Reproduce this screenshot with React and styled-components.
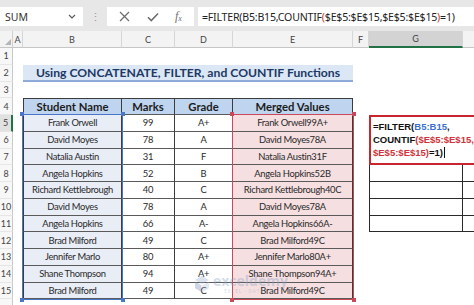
import React from 'react';
import styled, { createGlobalStyle } from 'styled-components';

const GlobalStyle = createGlobalStyle`
  html, body {
    margin: 0;
    padding: 0;
    background: #ffffff;
    overflow: hidden;
  }
`;

const COLS = '13px 10px 99px 53px 58px 120px 16px 94px 90px';
const CELL_FONT = "Lato, 'Open Sans', sans-serif";
const UI_FONT = "'Noto Sans', 'Open Sans', sans-serif";

const students = [
  ['Frank Orwell', '99', 'A+'],
  ['David Moyes', '78', 'A'],
  ['Natalia Austin', '31', 'F'],
  ['Angela Hopkins', '52', 'B'],
  ['Richard Kettlebrough', '40', 'C'],
  ['David Moyes', '78', 'A'],
  ['Angela Hopkins', '66', 'A-'],
  ['Brad Milford', '49', 'C'],
  ['Jennifer Marlo', '80', 'A+'],
  ['Shane Thompson', '94', 'A+'],
  ['Brad Milford', '49', 'C'],
];

const letters = ['A', 'B', 'C', 'D', 'E', 'F', 'G', 'H'];

const Window = styled.div`
  width: 474px;
  height: 305px;
  overflow: hidden;
  display: flex;
  flex-direction: column;
  background: #fff;
`;

// formula bar
const FormulaBar = styled.div`
  height: 31px;
  box-sizing: border-box;
  padding: 7px 0 5px 0;
  background: #e7e7e7;
  display: flex;
  align-items: stretch;
  font-family: ${UI_FONT};
  flex-shrink: 0;
`;

const NameBox = styled.div`
  width: 83px;
  background: #fff;
  display: flex;
  align-items: center;
  justify-content: space-between;
  padding: 0 7px 0 5px;
  box-sizing: border-box;
  font-size: 10.5px;
  color: #333;
`;

const Dots = styled.div`
  width: 24px;
  display: flex;
  align-items: center;
  justify-content: center;
  color: #9a9a9a;
  font-size: 11px;
`;

const ButtonGroup = styled.div`
  width: 87px;
  background: #fff;
  display: flex;
  align-items: center;
  justify-content: space-around;
  padding: 0 4px;
  box-sizing: border-box;
`;

const Fx = styled.span`
  font-family: 'Liberation Serif', serif;
  font-style: italic;
  font-size: 12px;
  color: #707070;
  sub {
    font-size: 8px;
    vertical-align: -1px;
  }
`;

const FormulaInput = styled.div`
  flex: 1;
  margin-left: 4px;
  background: #fff;
  display: flex;
  align-items: center;
  padding-left: 4px;
  font-size: 10.6px;
  letter-spacing: -0.22px;
  color: #222;
  white-space: nowrap;
  overflow: hidden;
`;

const Paren = styled.span`
  color: #c0392b;
`;

// sheet
const Sheet = styled.div`
  position: relative;
  flex: 1;
  display: grid;
  grid-template-columns: ${COLS};
  grid-template-rows: 17px repeat(17, 16.75px);
  overflow: hidden;
  font-family: ${CELL_FONT};
`;

const Corner = styled.div`
  grid-column: 1;
  grid-row: 1;
  background: #f3f3f3;
  border-right: 1px solid #d0d0d0;
  border-bottom: 1px solid #c6c6c6;
  box-sizing: border-box;
  display: flex;
  align-items: flex-end;
  justify-content: flex-end;
  padding: 0 1px 2px 0;
  &::after {
    content: '';
    width: 0;
    height: 0;
    border-left: 6px solid transparent;
    border-bottom: 6px solid #b5b5b5;
  }
`;

const ColHead = styled.div`
  grid-column: ${p => p.$col};
  grid-row: 1;
  background: ${p => (p.$active ? '#d3d3d3' : '#f3f3f3')};
  border-right: 1px solid #d6d6d6;
  border-bottom: ${p => (p.$active ? '2px solid #217346' : '1px solid #c6c6c6')};
  box-sizing: border-box;
  display: flex;
  align-items: center;
  justify-content: center;
  font-size: 9px;
  color: #444;
`;

const RowHead = styled.div`
  grid-column: 1;
  grid-row: ${p => p.$row};
  background: ${p => (p.$active ? '#e1e1e1' : '#f7f7f7')};
  border-right: ${p => (p.$active ? '2px solid #217346' : '1px solid #c9c9c9')};
  border-bottom: 1px solid #e6e6e6;
  box-sizing: border-box;
  display: flex;
  align-items: center;
  justify-content: center;
  font-size: 9px;
  color: #444;
`;

const TitleBand = styled.div`
  grid-column: 3 / 7;
  grid-row: 3;
  background: #dbe7f5;
  border-bottom: 2px solid #8eaad8;
  box-sizing: border-box;
  display: flex;
  align-items: center;
  justify-content: center;
  font-weight: 700;
  font-size: 12.2px;
  color: #203864;
  white-space: nowrap;
`;

const fills = {
  name: '#e8edf6',
  plain: '#ffffff',
  merged: '#f5dfe0',
  head: '#bfd4ee',
};

const TableCell = styled.div`
  grid-column: ${p => p.$col};
  grid-row: ${p => p.$row};
  background: ${p => fills[p.$fill]};
  border-right: 1px solid #3c3c3c;
  border-bottom: 1px solid #5a5a5a;
  border-left: ${p => (p.$first ? '1px solid #3c3c3c' : 'none')};
  border-top: ${p => (p.$top ? '1px solid #3c3c3c' : 'none')};
  box-sizing: border-box;
  display: flex;
  align-items: center;
  justify-content: center;
  font-size: ${p => (p.$head ? '11.3px' : '9.4px')};
  letter-spacing: ${p => (p.$head ? '0' : '-0.3px')};
  font-weight: ${p => (p.$head ? 700 : 400)};
  color: ${p => (p.$head ? '#1c1c1c' : '#2a2a2a')};
  white-space: nowrap;
  overflow: hidden;
`;

const Selection = styled.div`
  grid-column: ${p => p.$col};
  grid-row: 6 / 17;
  position: relative;
  z-index: 2;
  margin: -1px;
  border: 1.5px solid ${p => p.$color};
  pointer-events: none;
`;

const Handle = styled.span`
  position: absolute;
  width: 4px;
  height: 4px;
  background: ${p => p.$color};
  ${p => (p.$top ? 'top: -3px;' : 'bottom: -3px;')}
  ${p => (p.$left ? 'left: -3px;' : 'right: -3px;')}
`;

const Editor = styled.div`
  grid-column: 8 / 10;
  grid-row: 6 / 9;
  z-index: 3;
  background: #fff;
  border: 2px solid #c8252c;
  box-sizing: border-box;
  padding: 4px 0 0 2px;
  font-family: 'Liberation Sans', Arial, sans-serif;
  font-weight: 700;
  font-size: 9.5px;
  line-height: 12.8px;
  color: #111;
  white-space: nowrap;
`;

const Ref = styled.span`
  color: ${p => (p.$tone === 'blue' ? '#3c6fd1' : '#d0343b')};
`;

const Caret = styled.span`
  display: inline-block;
  width: 1px;
  height: 11px;
  background: #111;
  vertical-align: -2px;
  margin-left: 1px;
`;

const GridCell = styled.div`
  grid-column: ${p => p.$col};
  grid-row: ${p => p.$row};
  border-right: 1px solid #2a2a2a;
  border-bottom: 1px solid #2a2a2a;
  border-left: ${p => (p.$first ? '1px solid #2a2a2a' : 'none')};
  box-sizing: border-box;
`;

const Watermark = styled.div`
  position: absolute;
  left: 194px;
  top: 243px;
  display: flex;
  align-items: center;
  gap: 3px;
  opacity: 0.38;
  pointer-events: none;
  z-index: 4;
`;

const MarkText = styled.div`
  display: flex;
  flex-direction: column;
  align-items: center;
  line-height: 1;
  color: #8ea4c6;
  font-family: 'Open Sans', sans-serif;
  span:first-child {
    font-size: 14px;
    font-weight: 700;
  }
  span:last-child {
    font-size: 4.5px;
    letter-spacing: 1px;
    margin-top: 1px;
  }
`;

const Logo = () => (
  <svg width="16" height="18" viewBox="0 0 16 18">
    <path d="M8 1 L15 5 L8 9 L1 5 Z" fill="#9fb4d4" />
    <path d="M1 6.5 L7.5 10.2 L7.5 17 L1 13.3 Z" fill="#7d96c0" />
    <path d="M15 6.5 L8.5 10.2 L8.5 17 L15 13.3 Z" fill="#b7c6de" />
  </svg>
);

const App = () => (
  <Window>
    <GlobalStyle />
    <FormulaBar>
      <NameBox>
        SUM
        <svg width="8" height="5" viewBox="0 0 8 5">
          <path d="M1 1 L4 4 L7 1" fill="none" stroke="#555" strokeWidth="1.1" />
        </svg>
      </NameBox>
      <Dots>⋮</Dots>
      <ButtonGroup>
        <svg width="11" height="11" viewBox="0 0 11 11">
          <path d="M1 1 L10 10 M10 1 L1 10" stroke="#6b6b6b" strokeWidth="1.2" />
        </svg>
        <svg width="12" height="10" viewBox="0 0 12 10">
          <path d="M1 5.2 L4.3 8.6 L11 1.4" fill="none" stroke="#6b6b6b" strokeWidth="1.5" />
        </svg>
        <Fx>f<sub>x</sub></Fx>
      </ButtonGroup>
      <FormulaInput>
        =FILTER(B5:B15,COUNTIF<Paren>(</Paren>$E$5:$E$15,$E$5:$E$15<Paren>)</Paren>=1)
      </FormulaInput>
    </FormulaBar>

    <Sheet>
      <Corner />
      {letters.map((l, i) => (
        <ColHead key={l} $col={i + 2} $active={l === 'G'}>{l === 'H' ? '' : l}</ColHead>
      ))}
      {Array.from({ length: 17 }, (_, i) => (
        <RowHead key={i} $row={i + 2} $active={i + 1 === 5}>{i < 15 ? i + 1 : ''}</RowHead>
      ))}

      <TitleBand>Using CONCATENATE, FILTER, and COUNTIF Functions</TitleBand>

      {['Student Name', 'Marks', 'Grade', 'Merged Values'].map((h, i) => (
        <TableCell key={h} $col={i + 3} $row={5} $fill="head" $head $top $first={i === 0}>{h}</TableCell>
      ))}
      {students.map(([name, mark, grade], r) => (
        <React.Fragment key={r}>
          <TableCell $col={3} $row={r + 6} $fill="name" $first>{name}</TableCell>
          <TableCell $col={4} $row={r + 6} $fill="plain">{mark}</TableCell>
          <TableCell $col={5} $row={r + 6} $fill="plain">{grade}</TableCell>
          <TableCell $col={6} $row={r + 6} $fill="merged">{name + mark + grade}</TableCell>
        </React.Fragment>
      ))}

      <Selection $col={3} $color="#4a75c8">
        <Handle $color="#4a75c8" $top $left />
        <Handle $color="#4a75c8" $top />
        <Handle $color="#4a75c8" $left />
        <Handle $color="#4a75c8" />
      </Selection>
      <Selection $col={6} $color="#c9485a">
        <Handle $color="#c9485a" $top $left />
        <Handle $color="#c9485a" $top />
        <Handle $color="#c9485a" $left />
        <Handle $color="#c9485a" />
      </Selection>

      <Editor>
        =FILTER(<Ref $tone="blue">B5:B15</Ref>,<br />
        COUNTIF<Ref>($E$5:$E$15,</Ref><br />
        <Ref>$E$5:$E$15)</Ref>=1)<Caret />
      </Editor>
      {[9, 10, 11, 12].map(r => (
        <React.Fragment key={r}>
          <GridCell $col={8} $row={r} $first />
          <GridCell $col={9} $row={r} />
        </React.Fragment>
      ))}

      <Watermark>
        <Logo />
        <MarkText>
          <span>exceldemy</span>
          <span>EXCEL · DATA · BI</span>
        </MarkText>
      </Watermark>
    </Sheet>
  </Window>
);

export default App;
